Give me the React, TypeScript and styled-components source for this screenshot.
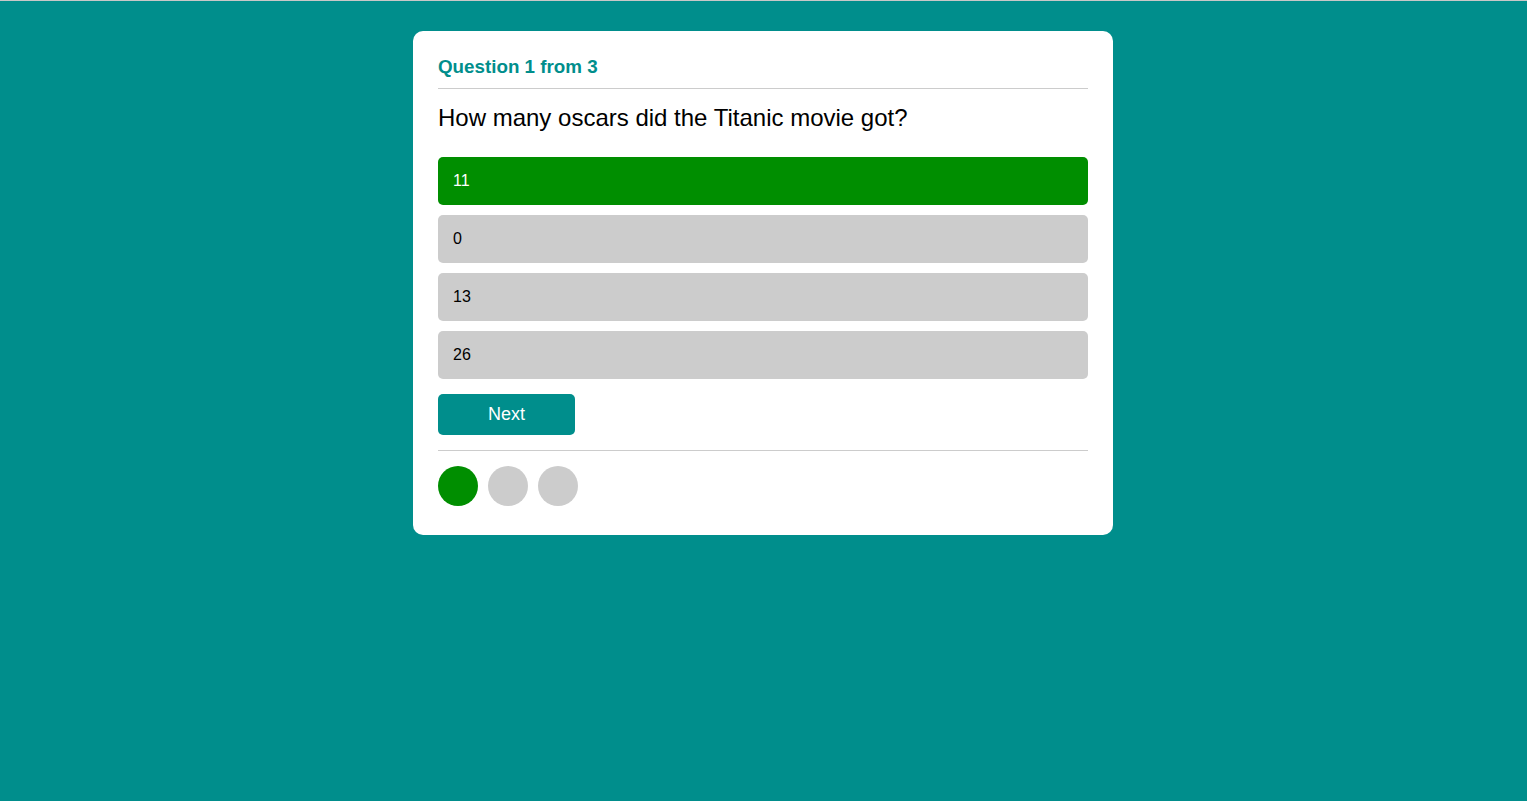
import React from "react";
import styled, { createGlobalStyle } from "styled-components";

const Global = createGlobalStyle`
  html, body { margin: 0; padding: 0; }
  body {
    background: #008e8c;
    border-top: 1px solid #c8c8c8;
    min-height: 800px;
    font-family: "Liberation Sans", Arial, sans-serif;
  }
`;

const Page = styled.div`
  display: flex;
  justify-content: center;
  padding-top: 30px;
  padding-right: 1px;
`;

const Card = styled.div`
  width: 650px;
  background: #fff;
  border-radius: 10px;
  padding: 25px 25px 29px;
`;

const Header = styled.div`
  color: #008e8c;
  font-weight: bold;
  font-size: 18.8px;
  padding-bottom: 10px;
  border-bottom: 1px solid #cccccc;
`;

const Question = styled.div`
  font-size: 24px;
  color: #000;
  margin: 15px 0 25px;
`;

const Options = styled.div`
  display: flex;
  flex-direction: column;
  gap: 10px;
`;

const Option = styled.div<{ $correct?: boolean }>`
  height: 48px;
  display: flex;
  align-items: center;
  padding-left: 15px;
  border-radius: 5px;
  font-size: 16px;
  background: ${(p) => (p.$correct ? "#008e00" : "#cccccc")};
  color: ${(p) => (p.$correct ? "#fff" : "#000")};
`;

const NextButton = styled.button`
  margin-top: 15px;
  width: 137px;
  height: 41px;
  border: none;
  border-radius: 5px;
  background: #008e8c;
  color: #fff;
  font-family: "Liberation Sans", Arial, sans-serif;
  font-size: 18px;
  cursor: pointer;
`;

const Divider = styled.div`
  margin-top: 15px;
  border-top: 1px solid #cccccc;
`;

const Dots = styled.div`
  display: flex;
  gap: 10px;
  margin-top: 15px;
`;

const Dot = styled.div<{ $done?: boolean }>`
  width: 40px;
  height: 40px;
  border-radius: 50%;
  background: ${(p) => (p.$done ? "#008e00" : "#cccccc")};
`;

export default function App() {
  const options = [
    { text: "11", correct: true },
    { text: "0" },
    { text: "13" },
    { text: "26" },
  ];
  return (
    <>
      <Global />
      <Page>
        <Card>
          <Header>Question 1 from 3</Header>
          <Question>How many oscars did the Titanic movie got?</Question>
          <Options>
            {options.map((o) => (
              <Option key={o.text} $correct={o.correct}>
                {o.text}
              </Option>
            ))}
          </Options>
          <NextButton>Next</NextButton>
          <Divider />
          <Dots>
            <Dot $done />
            <Dot />
            <Dot />
          </Dots>
        </Card>
      </Page>
    </>
  );
}
